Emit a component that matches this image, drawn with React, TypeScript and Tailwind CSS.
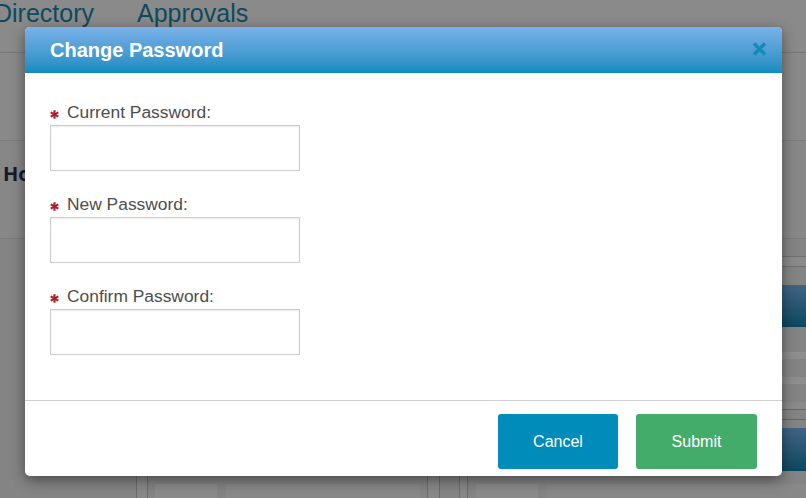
const fields = ["Current Password:", "New Password:", "Confirm Password:"];

function Asterisk() {
  return (
    <svg width="9" height="9" viewBox="0 0 10 10" className="mt-[5px] shrink-0">
      <g stroke="#b01c2a" strokeWidth="2.4">
        <line x1="5" y1="0.2" x2="5" y2="9.8" />
        <line x1="0.8" y1="2.6" x2="9.2" y2="7.4" />
        <line x1="0.8" y1="7.4" x2="9.2" y2="2.6" />
      </g>
    </svg>
  );
}

function CloseIcon() {
  return (
    <svg width="15" height="14" viewBox="0 0 15 14">
      <g stroke="#1689bb" strokeWidth="3.6" strokeLinecap="butt">
        <line x1="2" y1="1.5" x2="13" y2="12.5" />
        <line x1="13" y1="1.5" x2="2" y2="12.5" />
      </g>
    </svg>
  );
}

function PasswordField({ label }: { label: string }) {
  return (
    <div className="flex flex-col gap-[3px]">
      <div className="flex h-[20px] items-center gap-[8px] text-[17.4px] leading-[20px] text-[#4d4d4d]">
        <Asterisk />
        <span>{label}</span>
      </div>
      <input
        type="password"
        className="h-[46px] w-[250px] border border-[#cccccc] bg-white px-2 shadow-[inset_0_1px_2px_rgba(0,0,0,0.08)] outline-none"
      />
    </div>
  );
}

export default function App() {
  return (
    <div className="relative h-[498px] w-full overflow-hidden bg-[#848484] font-['Liberation_Sans',Arial,sans-serif]">
      {/* dimmed page behind the dialog */}
      <div className="flex h-full flex-col">
        <header className="flex h-[53px] shrink-0 gap-[43px] border-b border-[#777777] bg-[#8a8a8a] pt-[1px] text-[25px] leading-[24px] text-[#0c4a5e]">
          <span className="-ml-[6px]">Directory</span>
          <span>Approvals</span>
        </header>

        <div className="h-[88px] shrink-0 border-b border-[#7a7a7a] bg-[#898989]" />

        <div className="h-[98px] shrink-0 border-b border-[#7a7a7a] bg-[#878787] pl-[3px] pt-[19px] font-['Open_Sans',sans-serif] text-[20px] font-bold leading-[28px] text-[#151a22]">
          Home
        </div>

        <div className="flex flex-1">
          <div className="w-[136px] shrink-0" />
          <div className="w-[12px] shrink-0 border-x border-[#6c6c6c] bg-[#888888]" />
          <div className="flex w-[279px] shrink-0 items-end gap-[9px] px-[7px]">
            <div className="h-[14px] w-[62px] bg-[#8a8a8a]" />
            <div className="h-[14px] flex-1 bg-[#888888]" />
          </div>
          <div className="w-[13px] shrink-0 border-x border-[#6c6c6c] bg-[#888888]" />
          <div className="w-[19px] shrink-0" />
          <div className="w-[9px] shrink-0 border-x border-[#6c6c6c] bg-[#888888]" />
          <div className="flex flex-1 flex-col pt-[17px]">
            <div className="h-[11px] border-y border-[#6f6f6f] bg-[#8a8a8a]" />
            <div className="ml-auto mt-[18px] h-[42px] w-[140px] bg-gradient-to-b from-[#3f6484] to-[#07485f]" />
            <div className="mt-[25px] h-[7px] bg-[#8d8d8d]" />
            <div className="mt-[18px] h-[7px] bg-[#8d8d8d]" />
            <div className="mt-[18px] h-[8px] border-b border-[#666666] bg-[#8a8a8a]" />
            <div className="mt-[9px] h-[1px] bg-[#666666]" />
            <div className="ml-auto mt-[8px] h-[43px] w-[140px] bg-gradient-to-b from-[#3f6484] to-[#07485f]" />
            <div className="mt-auto flex h-[14px] gap-[9px] pl-[8px]">
              <div className="w-[62px] bg-[#8a8a8a]" />
              <div className="flex-1 bg-[#888888]" />
            </div>
          </div>
        </div>
      </div>

      {/* dialog */}
      <div className="absolute left-[25px] top-[27px] flex w-[757px] flex-col overflow-hidden rounded-[5px] bg-white shadow-[0_4px_14px_rgba(0,0,0,0.45)]">
        <div className="flex h-[46px] items-center justify-between bg-gradient-to-b from-[#78b1e9] to-[#0a8cc0] pl-[25px] pr-[15px]">
          <h2 className="text-[20px] font-bold leading-[24px] text-white">Change Password</h2>
          <button className="mt-[-2px] flex h-[16px] w-[16px] items-center justify-center">
            <CloseIcon />
          </button>
        </div>

        <div className="flex flex-col gap-[23px] px-[25px] pb-[45px] pt-[29px]">
          {fields.map((f) => (
            <PasswordField key={f} label={f} />
          ))}
        </div>

        <div className="flex justify-end gap-[18px] border-t border-[#d0d0d0] pb-[7px] pl-[25px] pr-[25px] pt-[13px]">
          <button className="h-[55px] w-[120px] rounded-[3px] bg-[#008cba] text-[16px] text-white">Cancel</button>
          <button className="h-[55px] w-[121px] rounded-[3px] bg-[#43ac6a] text-[16px] text-white">Submit</button>
        </div>
      </div>
    </div>
  );
}
